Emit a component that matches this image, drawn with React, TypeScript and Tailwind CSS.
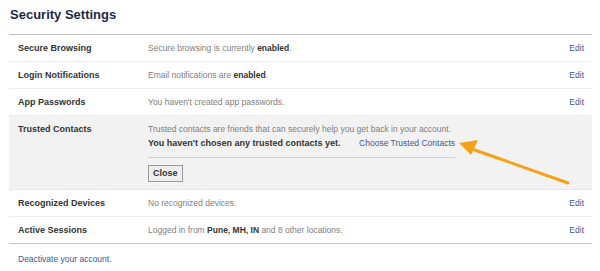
export default function App() {
  const rows1 = [
    { label: "Secure Browsing", desc: <>Secure browsing is currently <b className="text-[#333]">enabled</b>.</> },
    { label: "Login Notifications", desc: <>Email notifications are <b className="text-[#333]">enabled</b>.</> },
    { label: "App Passwords", desc: <>You haven't created app passwords.</> },
  ];
  const rows2 = [
    { label: "Recognized Devices", desc: <>No recognized devices.</> },
    { label: "Active Sessions", desc: <>Logged in from <b className="text-[#333]">Pune, MH, IN</b> and 8 other locations.</> },
  ];
  const Row = ({ label, desc, last }: { label: string; desc: React.ReactNode; last?: boolean }) => (
    <div className={`flex h-[27px] items-center border-b ${last ? "border-[#c4c4c4]" : "border-[#eeeeee]"}`}>
      <div className="w-[139px] pl-[9px] font-bold text-[9px] text-[#333]">{label}</div>
      <div className="flex-1 text-[#808080]">{desc}</div>
      <a className="pr-[8px] text-[#3b5998]">Edit</a>
    </div>
  );
  return (
    <div className="relative w-[600px] h-[271px] overflow-hidden bg-white font-['Liberation_Sans',Arial,sans-serif] text-[8.5px] leading-[14px] text-[#333]">
      <div className="pl-[9px] pr-[8px]">
        <h1 className="h-[34px] pt-[6px] pl-[1px] text-[13px] leading-[18px] font-bold text-[#1c2a47]">Security Settings</h1>
        <div className="border-t border-[#c4c4c4]">
          {rows1.map((r) => (
            <Row key={r.label} label={r.label} desc={r.desc} />
          ))}
          <div className="flex bg-[#f2f2f2] border-b border-[#e6e6e6] pt-[6px] pb-[7px]">
            <div className="w-[139px] pl-[9px] font-bold text-[9px] text-[#333]">Trusted Contacts</div>
            <div className="flex flex-col">
              <div className="text-[#808080]">Trusted contacts are friends that can securely help you get back in your account.</div>
              <div className="flex w-[307px] border-b border-[#d0d0d0] pb-[7px]">
                <span className="font-bold text-[9px] text-[#333]">You haven't chosen any trusted contacts yet.</span>
                <a className="ml-auto text-[#3b5998]">Choose Trusted Contacts</a>
              </div>
              <div className="pt-[7px]">
                <button className="h-[17px] px-[4px] border border-[#999] bg-[#eeeeee] font-bold text-[9px] text-[#333] leading-[15px]">Close</button>
              </div>
            </div>
          </div>
          {rows2.map((r, i) => (
            <Row key={r.label} label={r.label} desc={r.desc} last={i === rows2.length - 1} />
          ))}
        </div>
        <div className="pt-[8px] pl-[9px]">
          <a className="text-[#3b5998]">Deactivate your account.</a>
        </div>
      </div>
      <svg className="absolute left-0 top-0" width="600" height="271" viewBox="0 0 600 271">
        <line x1="568" y1="183" x2="472" y2="149" stroke="#f5a11c" strokeWidth="3" strokeLinecap="round" />
        <polygon points="459,143 478,140 471,155" fill="#f5a11c" />
      </svg>
    </div>
  );
}
